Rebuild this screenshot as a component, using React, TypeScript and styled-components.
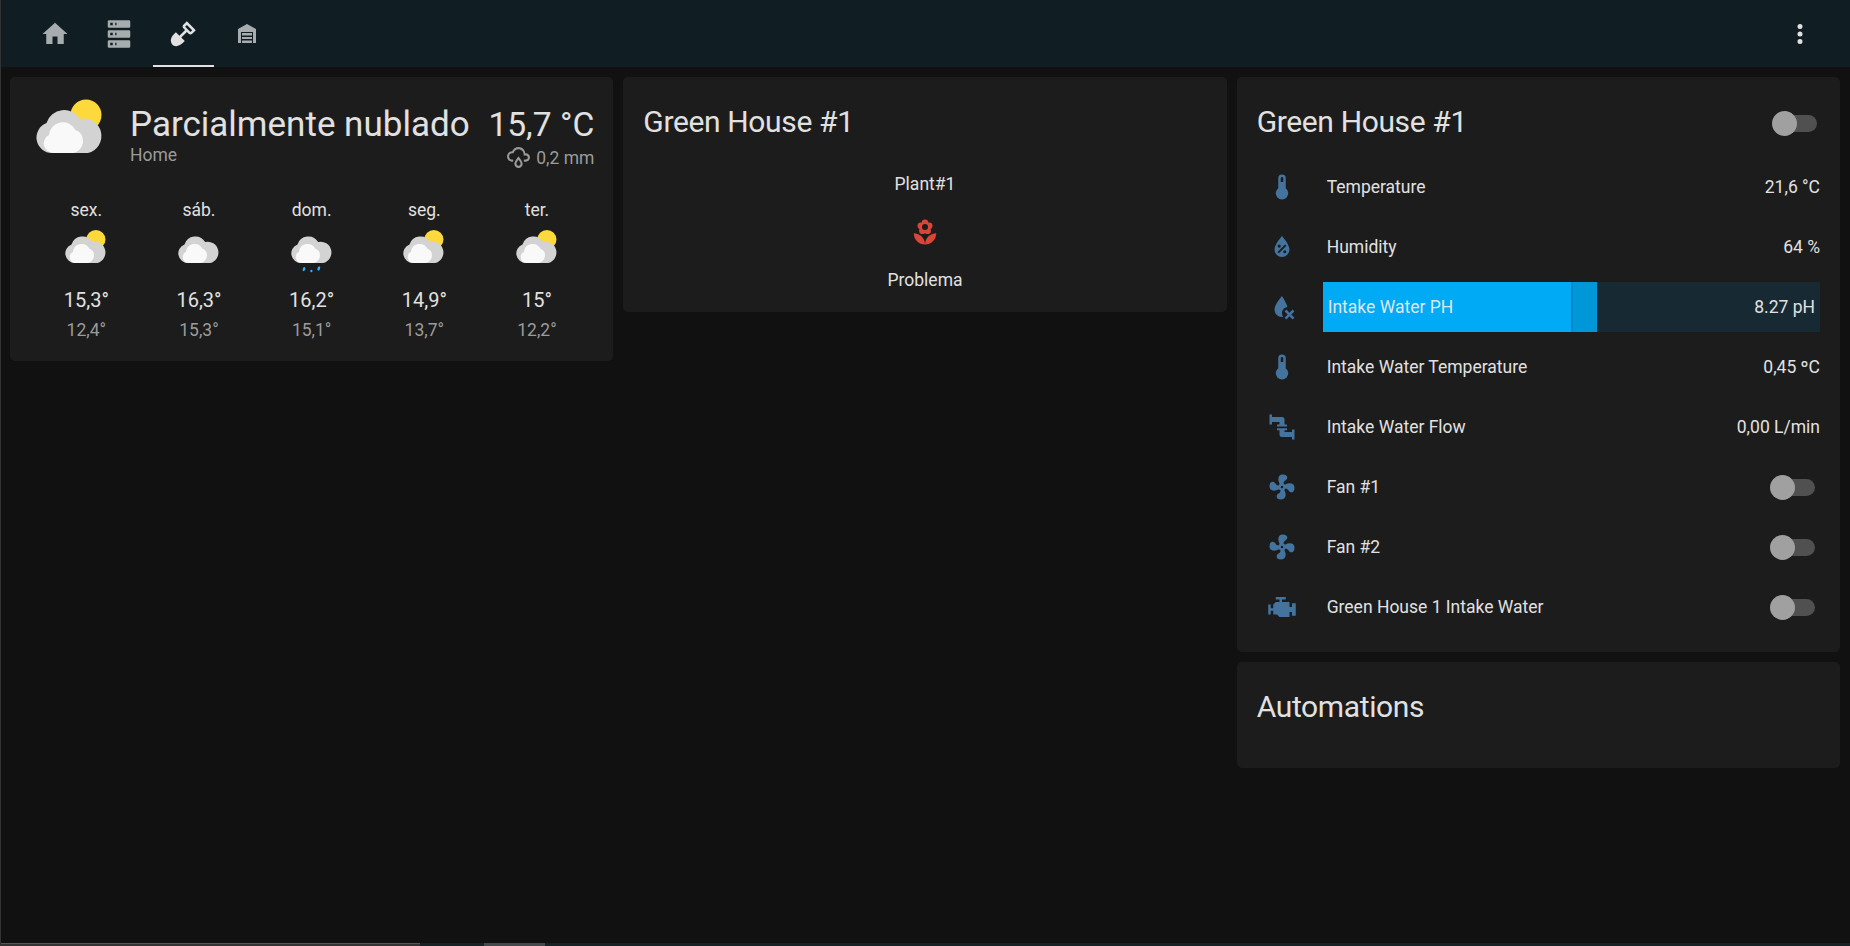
import { FC } from "react";
import styled, { createGlobalStyle } from "styled-components";

const GlobalStyle = createGlobalStyle`
  html, body {
    margin: 0;
    padding: 0;
    height: 100%;
    overflow: hidden;
    background: #111111;
    font-family: Roboto, "Liberation Sans", sans-serif;
    color: #e1e1e1;
  }
`;

const icons = {
  home: "M10,20V14H14V20H19V12H22L12,3L2,12H5V20H10Z",
  server:
    "M4,1H20A1,1 0 0,1 21,2V6A1,1 0 0,1 20,7H4A1,1 0 0,1 3,6V2A1,1 0 0,1 4,1M4,9H20A1,1 0 0,1 21,10V14A1,1 0 0,1 20,15H4A1,1 0 0,1 3,14V10A1,1 0 0,1 4,9M4,17H20A1,1 0 0,1 21,18V22A1,1 0 0,1 20,23H4A1,1 0 0,1 3,22V18A1,1 0 0,1 4,17M9,5H10V3H9V5M9,13H10V11H9V13M9,21H10V19H9V21M5,3V5H7V3H5M5,11V13H7V11H5M5,19V21H7V19H5Z",
  shovel:
    "M15.1,1.81L12.27,4.64C11.5,5.42 11.5,6.69 12.27,7.47L13.68,8.88L9.13,13.43L6.31,10.6L4.89,12C-0.06,17 3.5,20.5 3.5,20.5C3.5,20.5 7,24 12,19.09L13.41,17.68L10.61,14.88L15.15,10.34L16.56,11.75C17.34,12.53 18.61,12.53 19.39,11.75L22.22,8.92L15.1,1.81M17.97,10.34L13.73,6.1L15.1,4.73L19.34,8.97L17.97,10.34Z",
  garage:
    "M12,2L21,7V21H18V10H6V21H3V7ZM7,11H17V13.5H7ZM7,15H17V17H7ZM7,18.5H17V21H7Z",
  dots: "M12,16A2,2 0 0,1 14,18A2,2 0 0,1 12,20A2,2 0 0,1 10,18A2,2 0 0,1 12,16M12,10A2,2 0 0,1 14,12A2,2 0 0,1 12,14A2,2 0 0,1 10,12A2,2 0 0,1 12,10M12,4A2,2 0 0,1 14,6A2,2 0 0,1 12,8A2,2 0 0,1 10,6A2,2 0 0,1 12,4Z",
  thermometer:
    "M15 13V5A3 3 0 0 0 9 5V13A5 5 0 1 0 15 13M12 4A1 1 0 0 1 13 5V8H11V5A1 1 0 0 1 12 4Z",
  waterPercent:
    "M12,3.25C12,3.25 6,10 6,14C6,17.32 8.69,20 12,20A6,6 0 0,0 18,14C18,10 12,3.25 12,3.25M14.47,9.97L15.53,11.03L9.53,17.03L8.47,15.97M9.75,10A1.25,1.25 0 0,1 11,11.25A1.25,1.25 0 0,1 9.75,12.5A1.25,1.25 0 0,1 8.5,11.25A1.25,1.25 0 0,1 9.75,10M14.25,14.5A1.25,1.25 0 0,1 15.5,15.75A1.25,1.25 0 0,1 14.25,17A1.25,1.25 0 0,1 13,15.75A1.25,1.25 0 0,1 14.25,14.5Z",
  waterRemove:
    "M12,3.25C12,3.25 6,10 6,14C6,17.32 8.69,20 12,20C12.3,20 12.6,19.98 12.9,19.93C12.33,19.08 12,18.05 12,17C12,14.4 13.9,12.3 16.35,12C15.4,8.2 12,3.25 12,3.25M15.5,14.09L18,16.59L20.5,14.09L21.91,15.5L19.41,18L21.91,20.5L20.5,21.91L18,19.41L15.5,21.91L14.09,20.5L16.59,18L14.09,15.5Z",
  pipe: "M4,2H2V10H4V8H10V10H8V11.5H16V10H14V6A2,2 0 0,0 12,4H4V2ZM8,13H16V14.5H14V16H20V14H22V22H20V20H12A2,2 0 0,1 10,18V14.5H8V13Z",
  fan: "M12,11A1,1 0 0,0 11,12A1,1 0 0,0 12,13A1,1 0 0,0 13,12A1,1 0 0,0 12,11M12.5,2C17,2 17.11,5.57 14.75,6.75C13.76,7.24 13.32,8.29 13.13,9.22C13.61,9.42 14.03,9.73 14.35,10.13C18.05,8.13 22.03,8.92 22.03,12.5C22.03,17 18.46,17.1 17.28,14.73C16.78,13.74 15.72,13.3 14.79,13.11C14.59,13.59 14.28,14 13.88,14.34C15.87,18.03 15.08,22 11.5,22C7,22 6.91,18.42 9.27,17.24C10.25,16.75 10.69,15.71 10.89,14.79C10.4,14.59 9.97,14.27 9.65,13.87C5.96,15.85 2,15.07 2,11.5C2,7 5.56,6.89 6.74,9.26C7.24,10.25 8.29,10.68 9.22,10.87C9.41,10.39 9.73,9.97 10.14,9.65C8.15,5.96 8.94,2 12.5,2Z",
  engine:
    "M7,4V6H10V8H7L5,10V13H3V10H1V18H3V15H5V18H8L10,20H18V16H20V19H23V9H20V12H18V8H12V6H15V4H7Z",
  rainy:
    "M6,14.03A1,1 0 0,1 7,15.03C7,15.58 6.55,16.03 6,16.03C3.24,16.03 1,13.79 1,11.03C1,8.27 3.24,6.03 6,6.03C7,3.68 9.3,2.03 12,2.03C15.43,2.03 18.24,4.69 18.5,8.06L19,8.03A4,4 0 0,1 23,12.03C23,14.24 21.21,16.03 19,16.03H18C17.45,16.03 17,15.58 17,15.03C17,14.47 17.45,14.03 18,14.03H19A2,2 0 0,0 21,12.03A2,2 0 0,0 19,10.03H17V9.03C17,6.27 14.76,4.03 12,4.03C9.5,4.03 7.45,5.84 7.06,8.21C6.73,8.09 6.37,8.03 6,8.03A3,3 0 0,0 3,11.03A3,3 0 0,0 6,14.03M12,14.15C12.18,14.39 12.37,14.66 12.56,14.94C13,15.56 14,17.03 14,18C14,19.11 13.1,20 12,20A2,2 0 0,1 10,18C10,17.03 11,15.56 11.44,14.94C11.63,14.66 11.82,14.39 12,14.15M12,11.03L11.5,11.59C11.5,11.59 10.65,12.55 9.8,13.81C8.95,15.07 8,16.62 8,18A4,4 0 0,0 12,22A4,4 0 0,0 16,18C16,16.62 15.05,15.07 14.2,13.81C13.35,12.55 12.5,11.59 12.5,11.59L12,11.03Z",
};

const MdiIcon: FC<{ path: string; size: number; color: string }> = ({
  path,
  size,
  color,
}) => (
  <svg width={size} height={size} viewBox="0 0 24 24" fill={color} style={{ display: "block" }}>
    <path d={path} />
  </svg>
);

const FlowerIcon: FC = () => (
  <svg width={30} height={30} viewBox="0 0 24 24" fill="#db4437" style={{ display: "block" }}>
    <path d="M3,13A9,9 0 0,0 12,22C12,17 7.97,13 3,13Z" />
    <path d="M12,22A9,9 0 0,0 21,13C16,13 12,17 12,22Z" />
    <circle cx="12" cy="4.6" r="2.7" />
    <circle cx="15.3" cy="7" r="2.7" />
    <circle cx="14.05" cy="10.9" r="2.7" />
    <circle cx="9.95" cy="10.9" r="2.7" />
    <circle cx="8.7" cy="7" r="2.7" />
    <circle cx="12" cy="8" r="2.4" fill="#1c1c1c" />
  </svg>
);

type WeatherKind = "partly" | "cloudy" | "rainy";

const WeatherIcon: FC<{ kind: WeatherKind; width: number }> = ({ kind, width }) => (
  <svg width={width} viewBox="0 0 68 68" style={{ display: "block", overflow: "visible" }}>
    {kind === "partly" && <circle cx="50" cy="17" r="15.5" fill="#fdd93c" />}
    <path
      fill="#d3d3d3"
      d="M16,55A15.5,15.5 0 0 1 10.5,25A18.5,18.5 0 0 1 44,21A16.5,16.5 0 0 1 52,55Z"
    />
    <path
      fill="#f9f9f9"
      d="M17,55A9.5,9.5 0 0 1 13,37A14,14 0 0 1 39.5,32A11.5,11.5 0 0 1 47,43A12,12 0 0 1 36,55Z"
    />
    {kind === "rainy" && (
      <g fill="#30b3ff">
        <ellipse cx="21" cy="65" rx="2" ry="3.4" transform="rotate(20 21 65)" />
        <ellipse cx="33" cy="68" rx="1.8" ry="2.2" />
        <ellipse cx="45" cy="64" rx="2" ry="3.6" transform="rotate(20 45 64)" />
      </g>
    )}
  </svg>
);

const forecast: { day: string; kind: WeatherKind; high: string; low: string }[] = [
  { day: "sex.", kind: "partly", high: "15,3°", low: "12,4°" },
  { day: "sáb.", kind: "cloudy", high: "16,3°", low: "15,3°" },
  { day: "dom.", kind: "rainy", high: "16,2°", low: "15,1°" },
  { day: "seg.", kind: "partly", high: "14,9°", low: "13,7°" },
  { day: "ter.", kind: "partly", high: "15°", low: "12,2°" },
];

export default function App() {
  return (
    <Page>
      <GlobalStyle />
      <Header>
        <Tabs>
          <Tab>
            <MdiIcon path={icons.home} size={30} color="#a7adaf" />
          </Tab>
          <Tab>
            <MdiIcon path={icons.server} size={30} color="#a7adaf" />
          </Tab>
          <Tab $active>
            <MdiIcon path={icons.shovel} size={30} color="#e1e1e1" />
          </Tab>
          <Tab>
            <MdiIcon path={icons.garage} size={24} color="#a7adaf" />
          </Tab>
        </Tabs>
        <MenuButton>
          <MdiIcon path={icons.dots} size={30} color="#e1e1e1" />
        </MenuButton>
      </Header>
      <Columns>
        <Column>
          <Card>
            <WeatherTop>
              <WeatherIcon kind="partly" width={68} />
              <WeatherName>
                <Condition>Parcialmente nublado</Condition>
                <SecondaryText>Home</SecondaryText>
              </WeatherName>
              <WeatherTemp>
                <Temperature>15,7 °C</Temperature>
                <Precipitation>
                  <MdiIcon path={icons.rainy} size={25} color="#9b9b9b" />
                  0,2 mm
                </Precipitation>
              </WeatherTemp>
            </WeatherTop>
            <Forecast>
              {forecast.map((item) => (
                <ForecastDay key={item.day}>
                  <DayName>{item.day}</DayName>
                  <ForecastIcon>
                    <WeatherIcon kind={item.kind} width={42} />
                  </ForecastIcon>
                  <High>{item.high}</High>
                  <Low>{item.low}</Low>
                </ForecastDay>
              ))}
            </Forecast>
          </Card>
        </Column>
        <Column>
          <Card>
            <CardTitle>Green House #1</CardTitle>
            <PlantBox>
              <span>Plant#1</span>
              <FlowerIcon />
              <span>Problema</span>
            </PlantBox>
          </Card>
        </Column>
        <Column>
          <Card>
            <TitleRow>
              <CardTitle>Green House #1</CardTitle>
              <Toggle />
            </TitleRow>
            <Rows>
              <Row>
                <RowIcon>
                  <MdiIcon path={icons.thermometer} size={30} color="#44739e" />
                </RowIcon>
                <RowLabel>Temperature</RowLabel>
                <span>21,6 °C</span>
              </Row>
              <Row>
                <RowIcon>
                  <MdiIcon path={icons.waterPercent} size={30} color="#44739e" />
                </RowIcon>
                <RowLabel>Humidity</RowLabel>
                <span>64 %</span>
              </Row>
              <Row>
                <RowIcon>
                  <MdiIcon path={icons.waterRemove} size={30} color="#44739e" />
                </RowIcon>
                <Slider>
                  <SliderFill style={{ width: `${(274 / 497) * 100}%` }} />
                  <SliderLabel>Intake Water PH</SliderLabel>
                  <span>8.27 pH</span>
                </Slider>
              </Row>
              <Row>
                <RowIcon>
                  <MdiIcon path={icons.thermometer} size={30} color="#44739e" />
                </RowIcon>
                <RowLabel>Intake Water Temperature</RowLabel>
                <span>0,45 ºC</span>
              </Row>
              <Row>
                <RowIcon>
                  <MdiIcon path={icons.pipe} size={30} color="#44739e" />
                </RowIcon>
                <RowLabel>Intake Water Flow</RowLabel>
                <span>0,00 L/min</span>
              </Row>
              <Row>
                <RowIcon>
                  <MdiIcon path={icons.fan} size={30} color="#44739e" />
                </RowIcon>
                <RowLabel>Fan #1</RowLabel>
                <RowToggle />
              </Row>
              <Row>
                <RowIcon>
                  <MdiIcon path={icons.fan} size={30} color="#44739e" />
                </RowIcon>
                <RowLabel>Fan #2</RowLabel>
                <RowToggle />
              </Row>
              <Row>
                <RowIcon>
                  <MdiIcon path={icons.engine} size={30} color="#44739e" />
                </RowIcon>
                <RowLabel>Green House 1 Intake Water</RowLabel>
                <RowToggle />
              </Row>
            </Rows>
          </Card>
          <AutomationsCard>
            <CardTitle>Automations</CardTitle>
          </AutomationsCard>
        </Column>
      </Columns>
      <ScrollStrip>
        <ScrollLeft />
        <ScrollThumb />
      </ScrollStrip>
    </Page>
  );
}

const Page = styled.div`
  height: 946px;
  box-sizing: border-box;
  display: flex;
  flex-direction: column;
  border-left: 1px solid #333333;
  overflow: hidden;
`;

const Header = styled.header`
  height: 67px;
  flex: none;
  display: flex;
  align-items: stretch;
  justify-content: space-between;
  background: #101e24;
  padding: 0 35px 0 22px;
`;

const Tabs = styled.nav`
  display: flex;
`;

const Tab = styled.div<{ $active?: boolean }>`
  position: relative;
  width: 64px;
  display: flex;
  align-items: center;
  justify-content: center;
  &::after {
    content: "";
    display: ${(p) => (p.$active ? "block" : "none")};
    position: absolute;
    left: 2px;
    right: 1px;
    bottom: 0;
    height: 2px;
    background: #e1e1e1;
  }
`;

const MenuButton = styled.div`
  display: flex;
  align-items: center;
`;

const Columns = styled.main`
  flex: 1;
  display: grid;
  grid-template-columns: repeat(3, 1fr);
  gap: 10px;
  padding: 10px 10px 0 9px;
  align-items: start;
`;

const Column = styled.div`
  display: flex;
  flex-direction: column;
  gap: 10px;
`;

const Card = styled.section`
  background: #1c1c1c;
  border-radius: 5px;
  box-sizing: border-box;
  font-size: 17.5px;
  color: #e1e1e1;
  padding-bottom: 15px;
`;

const AutomationsCard = styled(Card)`
  height: 106px;
`;

const CardTitle = styled.h2`
  margin: 0;
  padding: 28px 20px 0;
  font-size: 30px;
  font-weight: 400;
  line-height: 34px;
  letter-spacing: -0.36px;
`;

const TitleRow = styled.div`
  display: flex;
  justify-content: space-between;
`;

const Toggle = styled.div`
  position: relative;
  width: 40px;
  height: 17px;
  margin: 38px 23px 0 0;
  border-radius: 9px;
  background: #505050;
  &::before {
    content: "";
    position: absolute;
    left: -5px;
    top: -4px;
    width: 25px;
    height: 25px;
    border-radius: 50%;
    background: #a0a0a0;
  }
`;

const RowToggle = styled(Toggle)`
  margin: 0 5px 0 0;
`;

const WeatherTop = styled.div`
  display: flex;
  align-items: flex-start;
  padding: 21px 19px 0 26px;
`;

const WeatherName = styled.div`
  flex: 1;
  padding: 7px 0 0 26px;
`;

const Condition = styled.div`
  font-size: 35px;
  font-weight: 400;
  line-height: 40px;
`;

const SecondaryText = styled.div`
  font-size: 17.5px;
  line-height: 20px;
  color: #9b9b9b;
`;

const WeatherTemp = styled.div`
  padding-top: 7px;
  display: flex;
  flex-direction: column;
  align-items: flex-end;
`;

const Temperature = styled.div`
  font-size: 33.6px;
  font-weight: 400;
  line-height: 40px;
`;

const Precipitation = styled.div`
  display: flex;
  align-items: center;
  gap: 5px;
  font-size: 17.5px;
  color: #9b9b9b;
`;

const Forecast = styled.div`
  display: grid;
  grid-template-columns: repeat(5, 1fr);
  padding: 30px 20px 4px 20px;
`;

const ForecastDay = styled.div`
  display: flex;
  flex-direction: column;
  align-items: center;
`;

const DayName = styled.div`
  line-height: 20px;
`;

const ForecastIcon = styled.div`
  height: 57px;
  padding-top: 9px;
  box-sizing: border-box;
`;

const High = styled.div`
  margin-top: 11px;
  font-size: 20px;
  line-height: 24px;
`;

const Low = styled.div`
  margin-top: 6px;
  line-height: 24px;
  color: #9b9b9b;
`;

const PlantBox = styled.div`
  display: flex;
  flex-direction: column;
  align-items: center;
  gap: 23px;
  padding: 35px 0 7px;
  line-height: 20px;
`;

const Rows = styled.div`
  padding: 18px 20px 0 22px;
`;

const Row = styled.div`
  height: 60px;
  display: flex;
  align-items: center;
  justify-content: space-between;
`;

const RowIcon = styled.div`
  width: 60px;
  padding-left: 8px;
  flex: none;
  display: flex;
  justify-content: flex-start;
`;

const RowLabel = styled.div`
  flex: 1;
`;

const Slider = styled.div`
  position: relative;
  flex: 1;
  height: 50px;
  margin-left: -4px;
  padding: 0 5px;
  box-sizing: border-box;
  display: flex;
  align-items: center;
  justify-content: space-between;
  background: #172a33;
  overflow: hidden;
  & > span {
    position: relative;
  }
`;

const SliderFill = styled.div`
  position: absolute;
  left: 0;
  top: 0;
  bottom: 0;
  background: linear-gradient(
    to right,
    #00aaf5 0,
    #00aaf5 calc(100% - 26px),
    #0288c8 calc(100% - 26px),
    #0288c8 calc(100% - 24px),
    #0097d9 calc(100% - 24px)
  );
`;

const SliderLabel = styled.span`
  color: #dfe6ea;
`;

const ScrollStrip = styled.div`
  height: 3px;
  flex: none;
  display: flex;
  background: #172226;
`;

const ScrollLeft = styled.div`
  width: 419px;
  background: #333333;
  border-top: 1px solid #555555;
`;

const ScrollThumb = styled.div`
  width: 61px;
  margin-left: 64px;
  background: #444a4c;
`;
